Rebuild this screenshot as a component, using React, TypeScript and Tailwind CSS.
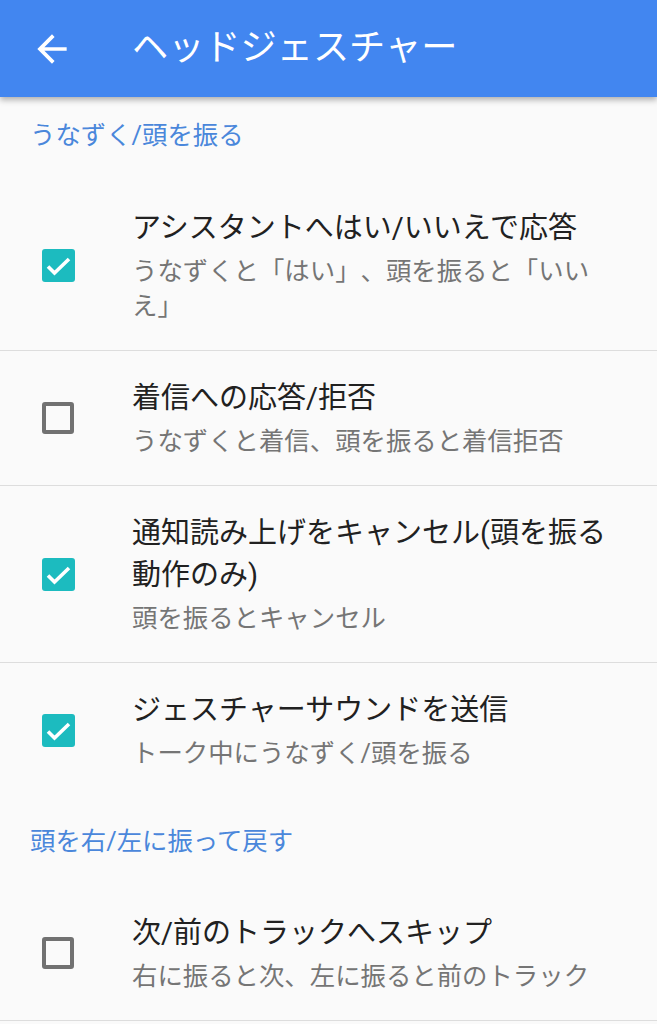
import { ReactNode } from "react";

type Pref = {
  title: string;
  summary: string;
  checked: boolean;
  divider?: boolean;
};

type Section = {
  title: string;
  headerClass: string;
  items: Pref[];
};

const sections: Section[] = [
  {
    title: "うなずく/頭を振る",
    headerClass: "pt-[21px] pb-[28px]",
    items: [
      {
        title: "アシスタントへはい/いいえで応答",
        summary: "うなずくと「はい」、頭を振ると「いいえ」",
        checked: true,
        divider: true,
      },
      {
        title: "着信への応答/拒否",
        summary: "うなずくと着信、頭を振ると着信拒否",
        checked: false,
        divider: true,
      },
      {
        title: "通知読み上げをキャンセル(頭を振る動作のみ)",
        summary: "頭を振るとキャンセル",
        checked: true,
        divider: true,
      },
      {
        title: "ジェスチャーサウンドを送信",
        summary: "トーク中にうなずく/頭を振る",
        checked: true,
      },
    ],
  },
  {
    title: "頭を右/左に振って戻す",
    headerClass: "pt-[27px] pb-[27px]",
    items: [
      {
        title: "次/前のトラックへスキップ",
        summary: "右に振ると次、左に振ると前のトラック",
        checked: false,
        divider: true,
      },
    ],
  },
];

const CheckBox = ({ checked }: { checked: boolean }) => {
  if (!checked) {
    return (
      <div className="w-[32px] h-[32px] rounded-[3px] border-[4px] border-[#717171]" />
    );
  }
  return (
    <div className="w-[33px] h-[33px] rounded-[3px] bg-[#1cbbbf] flex items-center justify-center">
      <svg width="33" height="33" viewBox="0 0 33 33">
        <path
          d="M6 17.5 L12.5 24 L27 10"
          fill="none"
          stroke="#ffffff"
          strokeWidth="3.6"
          strokeLinecap="butt"
          strokeLinejoin="miter"
        />
      </svg>
    </div>
  );
};

const PrefRow = ({ pref }: { pref: Pref }): ReactNode => (
  <div
    className={
      "flex items-center pl-[42px] pr-[46px] pt-[26px] pb-[26px] " +
      (pref.divider ? "border-b border-[#dddddd]" : "")
    }
  >
    <div className="w-[90px] shrink-0 flex items-center">
      <CheckBox checked={pref.checked} />
    </div>
    <div className="flex-1 min-w-0">
      <p className="text-[29px] leading-[42px] text-[#212121]">{pref.title}</p>
      <p className="mt-[5px] text-[25.4px] leading-[35px] text-[#757575]">
        {pref.summary}
      </p>
    </div>
  </div>
);

const App = () => {
  return (
    <div
      className="w-[657px] h-[1024px] overflow-hidden bg-[#fafafa] relative [text-spacing-trim:space-all]"
      style={{ fontFamily: 'Roboto, "Noto Sans CJK JP", sans-serif' }}
    >
      <div className="relative z-10 h-[97px] bg-[#4286f0] flex items-center shadow-[0_3px_6px_rgba(0,0,0,0.3)]">
        <div className="w-[132px] shrink-0 flex items-center pl-[30px]">
          <svg width="44" height="44" viewBox="0 0 24 24" fill="#ffffff">
            <path d="M20 11H7.83l5.59-5.59L12 4l-8 8 8 8 1.41-1.41L7.83 13H20v-2z" />
          </svg>
        </div>
        <h1 className="text-[36.2px] text-white font-normal leading-none">
          ヘッドジェスチャー
        </h1>
      </div>

      {sections.map((section) => (
        <div key={section.title}>
          <div className={"pl-[30px] " + section.headerClass}>
            <h2 className="text-[25.4px] leading-[35px] text-[#4a87db]">
              {section.title}
            </h2>
          </div>
          {section.items.map((item) => (
            <PrefRow key={item.title} pref={item} />
          ))}
        </div>
      ))}
    </div>
  );
};

export default App;
